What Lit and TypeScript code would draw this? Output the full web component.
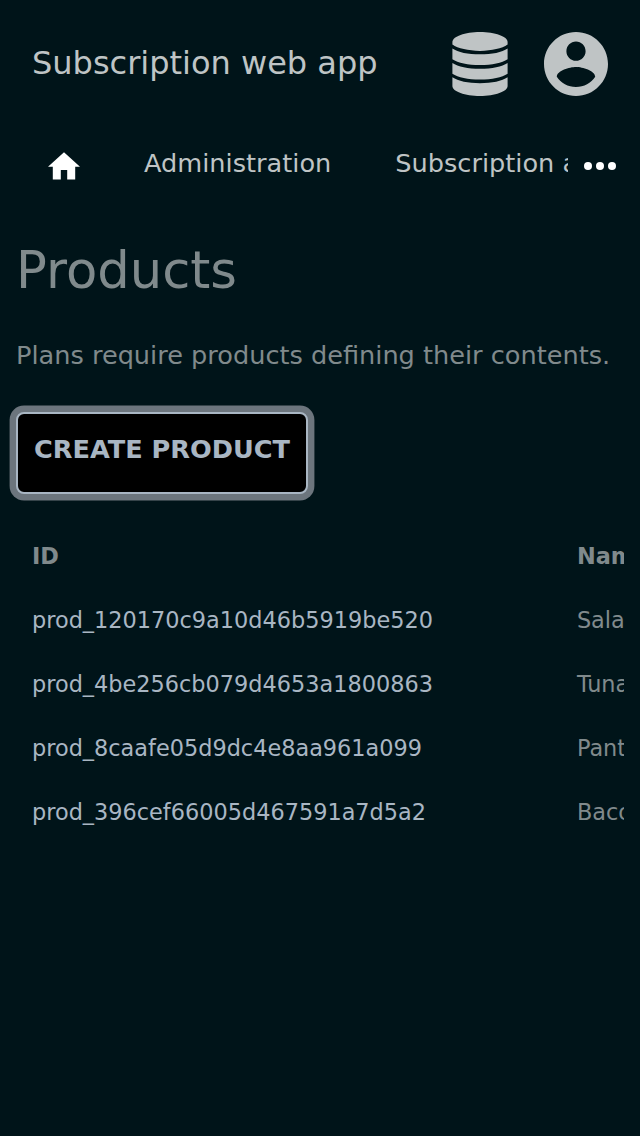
import { LitElement, html, css } from "lit";
import { customElement } from "lit/decorators.js";

interface Product { id: string; name: string; }

const PRODUCTS: Product[] = [
  { id: "prod_120170c9a10d46b5919be520", name: "Salad" },
  { id: "prod_4be256cb079d4653a1800863", name: "Tuna" },
  { id: "prod_8caafe05d9dc4e8aa961a099", name: "Pants" },
  { id: "prod_396cef66005d467591a7d5a2", name: "Bacon" },
];

@customElement("app-header")
class AppHeader extends LitElement {
  static styles = css`
    :host { display: flex; align-items: center; height: 128px; padding: 0 32px; box-sizing: border-box; color: #bfc4c5; }
    .title { flex: 1; font-size: 32px; line-height: 38px; padding-bottom: 2px; white-space: nowrap; }
    .icons { display: flex; gap: 36px; }
    svg { display: block; height: 64px; fill: currentColor; }
    .db { width: 56px; }
    .user { width: 64px; }
  `;
  render() {
    return html`
      <div class="title">Subscription web app</div>
      <div class="icons">
        <svg class="db" viewBox="0 0 56 64">
          <path d="M28 0C43 0 55.600 4.500 55.600 10V12.600C50 16.500 40 18.900 28 18.900S6 16.500 .4 12.600V10C.4 4.500 13 0 28 0Z" />
          <path d="M.4 16.400C6 20.300 16 22.300 28 22.300S50 20.300 55.600 16.400V27.200C50 31 40 33.100 28 33.100S6 31 .4 27.200Z" />
          <path d="M.4 30.900C6 34.700 16 36.700 28 36.700S50 34.700 55.600 30.900V41.700C50 45.500 40 47.500 28 47.500S6 45.500 .4 41.700Z" />
          <path d="M.4 45.300C6 49.200 16 51.200 28 51.200S50 49.200 55.600 45.300V54C55.600 59.500 43 64 28 64S.4 59.500 .4 54Z" />
        </svg>
        <svg class="user" viewBox="2 2 20 20">
          <path d="M12 2C6.480 2 2 6.480 2 12s4.480 10 10 10 10-4.480 10-10S17.520 2 12 2zm0 3c1.660 0 3 1.340 3 3s-1.340 3-3 3-3-1.340-3-3 1.340-3 3-3zm0 14.200c-2.500 0-4.710-1.280-6-3.220.03-1.990 4-3.080 6-3.080 1.990 0 5.970 1.090 6 3.080-1.290 1.940-3.500 3.220-6 3.220z" />
        </svg>
      </div>`;
  }
}

@customElement("app-nav")
class AppNav extends LitElement {
  static styles = css`
    :host { display: flex; height: 72px; padding: 0 24px 0 16px; box-sizing: border-box; font-size: 25.6px; line-height: 30px; color: #bfc4c5; }
    .items { display: flex; flex: 1; min-width: 0; overflow: hidden; margin-right: 16px; }
    .item { flex: none; padding: 20px 32px 0; white-space: nowrap; }
    .home { padding-top: 24px; }
    svg { display: block; fill: #fff; }
    .more { padding-top: 34px; }
  `;
  render() {
    return html`
      <div class="items">
        <div class="item home">
          <svg width="32" height="28" viewBox="2 2.800 20 17.500"><path d="M10 20v-6h4v6h5v-8h3L12 3 2 12h3v8z" /></svg>
        </div>
        <div class="item">Administration</div>
        <div class="item">Subscription administration</div>
      </div>
      <svg class="more" width="32" height="8" viewBox="0 0 32 8">
        <circle cx="4" cy="4" r="4" /><circle cx="16" cy="4" r="4" /><circle cx="28" cy="4" r="4" />
      </svg>`;
  }
}

@customElement("app-root")
class AppRoot extends LitElement {
  static styles = css`
    :host { display: block; min-height: 1136px; background: #001419; color: #808a8c; font-family: "DejaVu Sans", sans-serif; overflow: hidden; }
    .content { padding: 0 16px; }
    h1 { margin: 40px 0 0; font-size: 51.200px; line-height: 60px; font-weight: 400; }
    p { margin: 40px 0 0; font-size: 25.600px; line-height: 30px; white-space: nowrap; }
    button { display: block; margin: 42px 0 0; width: 292px; height: 82px; padding: 0 0 9px; box-sizing: border-box; border: 2px solid #a9b6c3; border-radius: 8px; background: #000; color: #a9b6c3; box-shadow: 0 0 0 6.400px #6c757d; font: 700 25.600px/30px "DejaVu Sans", sans-serif; white-space: nowrap; }
    .table { margin-top: 30px; overflow: hidden; }
    .row { display: grid; grid-template-columns: 544.900px 300px; height: 64px; align-items: center; font-size: 22.400px; line-height: 26px; white-space: nowrap; }
    .cell { padding-left: 16px; }
    .head { font-weight: 700; }
    .id { color: #a9b6c3; }
  `;
  render() {
    return html`
      <app-header></app-header>
      <app-nav></app-nav>
      <div class="content">
        <h1>Products</h1>
        <p>Plans require products defining their contents.</p>
        <button>CREATE PRODUCT</button>
        <div class="table">
          <div class="row head"><div class="cell">ID</div><div class="cell">Name</div></div>
          ${PRODUCTS.map((p) => html`<div class="row"><div class="cell id">${p.id}</div><div class="cell">${p.name}</div></div>`)}
        </div>
      </div>`;
  }
}
